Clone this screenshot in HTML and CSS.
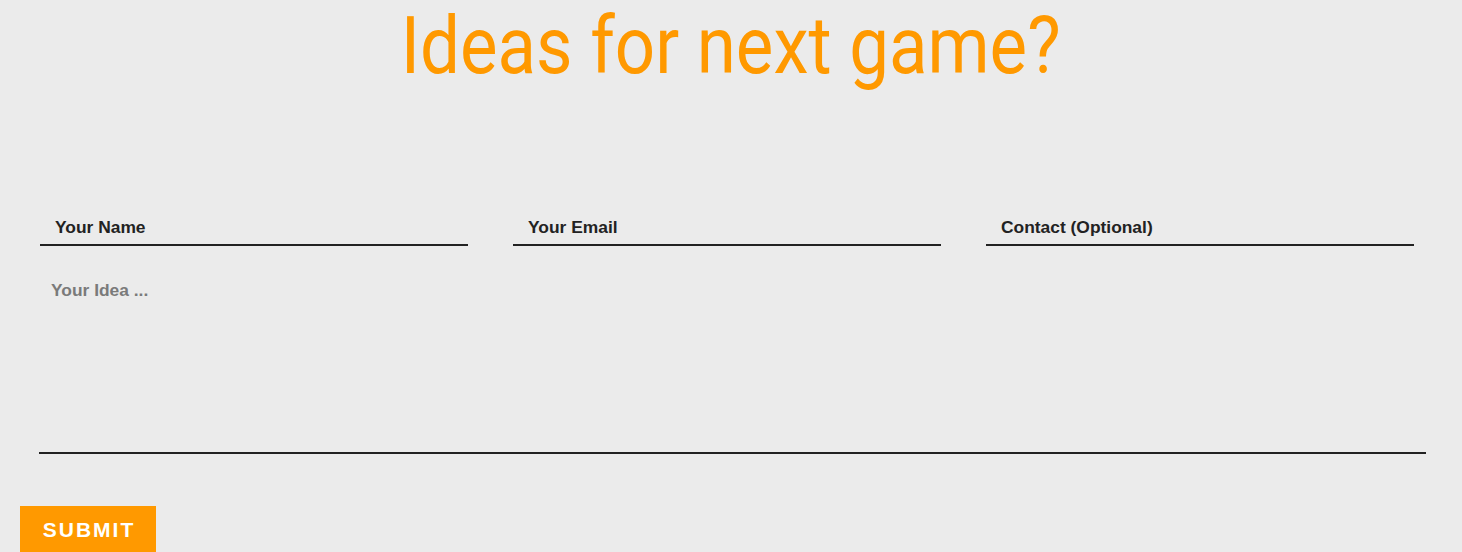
FILE: index.html
```html
<!DOCTYPE html>
<html lang="en">
<head>
<meta charset="utf-8">
<title>Ideas for next game?</title>
<link rel="stylesheet" href="styles.css">
</head>
<body>
<section class="ideas">
  <h1 class="title"><span class="title-text">Ideas for next game?</span></h1>
  <form class="idea-form">
    <div class="fields">
      <input class="field" type="text" placeholder="Your Name">
      <input class="field" type="email" placeholder="Your Email">
      <input class="field" type="text" placeholder="Contact (Optional)">
    </div>
    <textarea class="idea" placeholder="Your Idea ..."></textarea>
    <button class="submit" type="button">SUBMIT</button>
  </form>
</section>
</body>
</html>
```

FILE: styles.css
```css
html, body {
  margin: 0;
  padding: 0;
  background: #ebebeb;
  overflow: hidden;
}
.ideas {
  display: flex;
  flex-direction: column;
}
.title {
  margin: 0;
  padding-top: 0;
  text-align: center;
  font-family: Roboto, "Liberation Sans", sans-serif;
  font-weight: 400;
  font-size: 80px;
  line-height: 92px;
  color: #ff9900;
}
.title-text {
  display: inline-block;
  transform: scaleX(0.885);
}
.idea-form {
  display: flex;
  flex-direction: column;
  padding-top: 121px;
}
.fields {
  display: flex;
  gap: 45px;
  padding-left: 40px;
}
.field {
  width: 428px;
  box-sizing: border-box;
  border: none;
  border-bottom: 2px solid #222;
  background: transparent;
  padding: 0 0 2px 15px;
  height: 33px;
  font-family: "Liberation Sans", Arial, sans-serif;
  font-weight: 700;
  font-size: 17.4px;
  color: #222;
  outline: none;
}
.field::placeholder {
  color: #222;
  opacity: 1;
}
.idea {
  margin: 25px 0 0 39px;
  width: 1387px;
  height: 183px;
  box-sizing: border-box;
  border: none;
  border-bottom: 2px solid #222;
  background: transparent;
  padding: 9px 12px;
  resize: none;
  font-family: "Liberation Sans", Arial, sans-serif;
  font-weight: 700;
  font-size: 17.4px;
  color: #222;
  outline: none;
}
.idea::placeholder {
  color: #7a7a7a;
  opacity: 1;
}
.submit {
  align-self: flex-start;
  margin: 52px 0 0 20px;
  width: 136px;
  height: 50px;
  border: none;
  background: #ff9900;
  color: #fff;
  font-family: "Liberation Sans", Arial, sans-serif;
  font-weight: 700;
  font-size: 21px;
  letter-spacing: 2px;
  padding: 0 0 3px 2px;
  cursor: pointer;
}
```
